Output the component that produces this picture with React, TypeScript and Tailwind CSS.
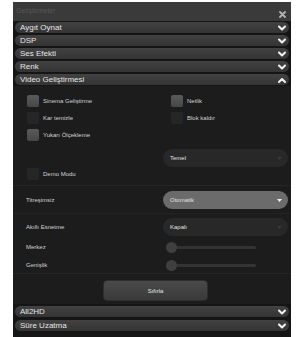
import React from "react";

const font = { fontFamily: '"Liberation Sans", Arial, sans-serif' };

function Chevron({ up = false }: { up?: boolean }) {
  return (
    <svg width="8" height="6" viewBox="0 0 8 6" className="shrink-0">
      <polyline
        points={up ? "1,5 4,2 7,5" : "1,1.5 4,4.5 7,1.5"}
        fill="none"
        stroke="#f2f2f2"
        strokeWidth="2"
        strokeLinecap="round"
        strokeLinejoin="round"
      />
    </svg>
  );
}

function SectionRow({ title, up = false }: { title: string; up?: boolean }) {
  return (
    <div className="h-[11px] mx-[2px] rounded-full bg-gradient-to-b from-[#424242] to-[#343434] flex items-center justify-between pl-[5px] pr-[3px]">
      <span className="text-[8px] leading-none text-[#e6e6e6]">{title}</span>
      <Chevron up={up} />
    </div>
  );
}

function Check({ label, on }: { label: string; on: boolean }) {
  return (
    <div className="h-[12px] flex items-center gap-[4px]">
      <div
        className={
          on
            ? "w-[12px] h-[12px] rounded-[2px] bg-gradient-to-b from-[#5a5a5a] to-[#474747]"
            : "w-[12px] h-[12px] rounded-[2px] bg-[#262626]"
        }
      />
      <span className="text-[6px] leading-none text-[#d2d2d2]">{label}</span>
    </div>
  );
}

function Select({ value, active = false }: { value: string; active?: boolean }) {
  return (
    <div
      className={
        active
          ? "w-[125px] h-[18px] rounded-full bg-[#6b6b6b] flex items-center justify-between pl-[7px] pr-[6px]"
          : "w-[125px] h-[18px] rounded-full bg-[#282828] flex items-center justify-between pl-[7px] pr-[6px]"
      }
    >
      <span className="text-[6px] leading-none text-[#e0e0e0]">{value}</span>
      <svg width="5" height="3" viewBox="0 0 5 3">
        <polygon points="0,0 5,0 2.5,3" fill={active ? "#f0f0f0" : "#3a3a3a"} />
      </svg>
    </div>
  );
}

function Slider({ label }: { label: string }) {
  return (
    <div className="h-[12px] flex items-center">
      <span className="w-[153px] pl-[13px] text-[6px] leading-none text-[#d2d2d2]">{label}</span>
      <div className="relative w-[90px] h-[12px] flex items-center">
        <div className="w-full h-[3px] rounded-full bg-[#333]" />
        <div className="absolute left-0 w-[11px] h-[11px] rounded-full bg-[#3f3f3f]" />
      </div>
    </div>
  );
}

export default function App() {
  return (
    <div className="w-[303px] h-[337px] bg-white" style={font}>
      <div className="ml-[13px] pt-[2px] w-[278px]">
        <div className="h-[335px] bg-[#151515] flex flex-col">
          <div className="h-[19px] bg-[#3a3a3a] flex items-start justify-between pl-[3px] pr-[5px]">
            <span className="mt-[5px] text-[7px] leading-none text-[#565656]">Geliştirmeler</span>
            <svg width="7" height="7" viewBox="0 0 7 7" className="mt-[9px]">
              <path d="M1 1 L6 6 M6 1 L1 6" stroke="#b4b4b4" strokeWidth="1.8" strokeLinecap="round" />
            </svg>
          </div>

          <div className="pt-[1px] flex flex-col gap-[2px]">
            <SectionRow title="Aygıt Oynat" />
            <SectionRow title="DSP" />
            <SectionRow title="Ses Efekti" />
            <SectionRow title="Renk" />
            <SectionRow title="Video Geliştirmesi" up />
          </div>

          <div className="mt-[1px] bg-[#1c1c1c] flex flex-col pt-[9px] pb-[3px]">
            <div className="grid grid-cols-[144px_1fr] gap-y-[5px] pl-[14px]">
              <Check label="Sinema Geliştirme" on />
              <Check label="Netlik" on />
              <Check label="Kar temizle" on={false} />
              <Check label="Blok kaldır" on={false} />
              <Check label="Yukarı Ölçekleme" on />
            </div>
            <div className="mt-[8px] self-end mr-[3px]">
              <Select value="Temel" />
            </div>
            <div className="mt-[1px] pl-[14px]">
              <Check label="Demo Modu" on={false} />
            </div>
            <div className="mt-[5px] h-px bg-[#262626]" />
            <div className="mt-[5px] flex items-center justify-between pl-[13px] pr-[3px]">
              <span className="text-[6px] leading-none text-[#d2d2d2]">Titreşimsiz</span>
              <Select value="Otomatik" active />
            </div>
            <div className="mt-[4px] h-px bg-[#232323]" />
            <div className="mt-[4px] flex items-center justify-between pl-[13px] pr-[3px]">
              <span className="text-[6px] leading-none text-[#d2d2d2]">Akıllı Esnetme</span>
              <Select value="Kapalı" />
            </div>
            <div className="mt-[5px]">
              <Slider label="Merkez" />
            </div>
            <div className="mt-[6px]">
              <Slider label="Genişlik" />
            </div>
            <div className="mt-[2px] h-px bg-[#262626]" />
            <div className="mt-[6px] ml-[90px] w-[105px] h-[21px] rounded-[4px] bg-gradient-to-b from-[#4a4a4a] to-[#3a3a3a] border border-[#2e2e2e] flex items-center justify-center">
              <span className="text-[6px] leading-none text-[#e6e6e6]">Sıfırla</span>
            </div>
          </div>

          <div className="mt-[2px] flex flex-col gap-[3px]">
            <SectionRow title="All2HD" />
            <SectionRow title="Süre Uzatma" />
          </div>
        </div>
      </div>
    </div>
  );
}
